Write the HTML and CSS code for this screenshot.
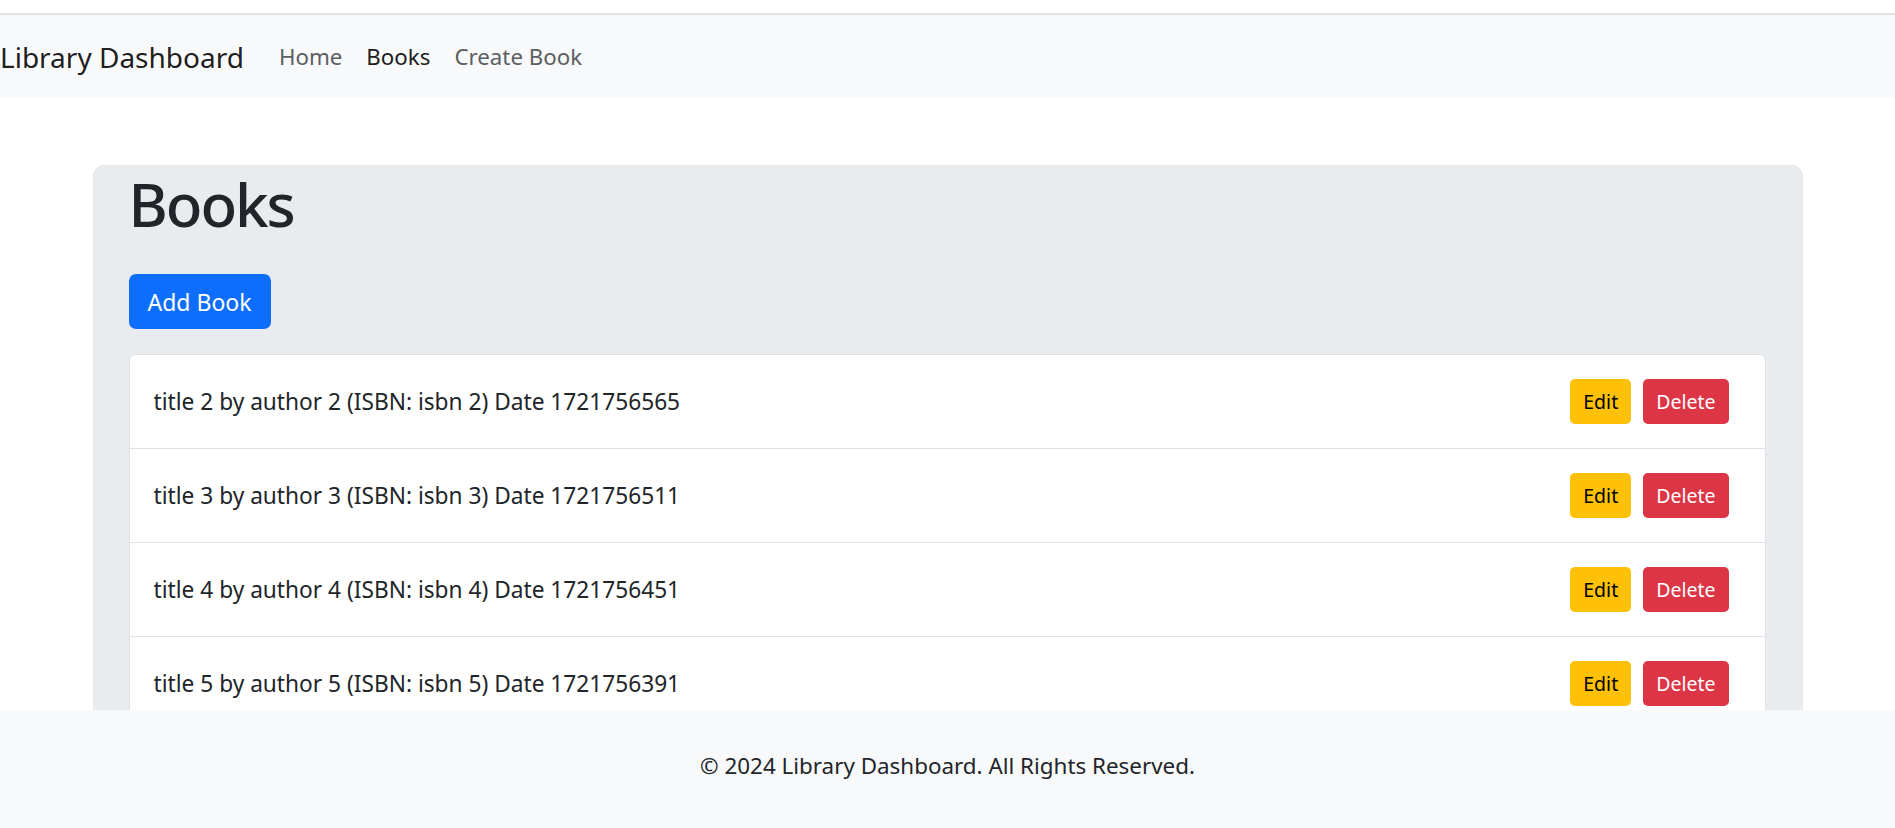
FILE: index.html
```html
<!DOCTYPE html>
<html lang="en">
<head>
<meta charset="utf-8">
<title>Library Dashboard</title>
<link rel="stylesheet" href="styles.css">
</head>
<body>
<div class="topstrip"></div>
<nav class="navbar">
  <a class="brand" href="#">Library Dashboard</a>
  <ul class="nav-links">
    <li><a class="nav-link" href="#">Home</a></li>
    <li><a class="nav-link active" href="#">Books</a></li>
    <li><a class="nav-link" href="#">Create Book</a></li>
  </ul>
</nav>
<main class="main">
  <section class="panel">
    <h1 class="title">Books</h1>
    <a class="btn btn-primary" href="#">Add Book</a>
    <ul class="list">
      <li class="item"><span>title 2 by author 2 (ISBN: isbn 2) Date 1721756565</span><div class="actions"><a class="btn-sm btn-warning" href="#">Edit</a><a class="btn-sm btn-danger" href="#">Delete</a></div></li>
      <li class="item"><span>title 3 by author 3 (ISBN: isbn 3) Date 1721756511</span><div class="actions"><a class="btn-sm btn-warning" href="#">Edit</a><a class="btn-sm btn-danger" href="#">Delete</a></div></li>
      <li class="item"><span>title 4 by author 4 (ISBN: isbn 4) Date 1721756451</span><div class="actions"><a class="btn-sm btn-warning" href="#">Edit</a><a class="btn-sm btn-danger" href="#">Delete</a></div></li>
      <li class="item"><span>title 5 by author 5 (ISBN: isbn 5) Date 1721756391</span><div class="actions"><a class="btn-sm btn-warning" href="#">Edit</a><a class="btn-sm btn-danger" href="#">Delete</a></div></li>
      <li class="item"><span>title 6 by author 6 (ISBN: isbn 6) Date 1721756331</span><div class="actions"><a class="btn-sm btn-warning" href="#">Edit</a><a class="btn-sm btn-danger" href="#">Delete</a></div></li>
    </ul>
  </section>
</main>
<footer class="footer">© 2024 Library Dashboard. All Rights Reserved.</footer>
</body>
</html>
```

FILE: styles.css
```css
* { box-sizing: border-box; }
html, body { margin: 0; padding: 0; }
body {
  font-family: "Noto Sans", "Open Sans", sans-serif;
  font-size: 22.7px;
  color: #212529;
  background: #fff;
  overflow: hidden;
  height: 828px;
}
a { text-decoration: none; }
.topstrip {
  height: 15px;
  border-bottom: 2px solid #e2e2e2;
}
.navbar {
  height: 83px;
  background: #f8f9fa;
  display: flex;
  align-items: center;
}
.brand {
  font-size: 28px;
  color: rgba(0,0,0,0.9);
  margin-right: 23px;
  line-height: 1.5;
}
.nav-links {
  list-style: none;
  margin: 0;
  padding: 0;
  display: flex;
}
.nav-link {
  display: block;
  padding: 0 12px;
  font-size: 22.3px;
  color: #5c5f62;
}
.nav-link.active { color: #1d1d1d; }
.main {
  padding-top: 67px;
}
.panel {
  width: 1710px;
  margin: 0 auto;
  background: #e9ecef;
  border-radius: 11px;
  padding: 0 37px 40px 36px;
}
.title {
  margin: 0;
  font-size: 60px;
  font-weight: 500;
  letter-spacing: -2px;
  line-height: 1;
  padding-top: 9px;
  padding-bottom: 40px;
  color: #212529;
}
.btn {
  display: inline-flex;
  align-items: center;
  height: 55px;
  padding: 0 19px;
  border-radius: 7px;
  font-size: 23px;
}
.btn-primary {
  background: #0d6efd;
  color: #fff;
}
.list {
  list-style: none;
  margin: 25px 0 0;
  padding: 0;
  background: #fff;
  border: 1px solid #dee2e6;
  border-radius: 7px;
}
.item {
  height: 94px;
  display: flex;
  align-items: center;
  justify-content: space-between;
  padding: 0 36px 0 24px;
  border-bottom: 1px solid #dee2e6;
}
.actions {
  display: flex;
  gap: 12px;
}
.btn-sm {
  display: inline-flex;
  align-items: center;
  justify-content: center;
  height: 45px;
  padding: 0 13px;
  border-radius: 5px;
  font-size: 19.5px;
}
.btn-warning { background: #ffc107; color: #000; }
.btn-danger { background: #dc3545; color: #fff; }
.footer {
  position: fixed;
  left: 0;
  right: 0;
  bottom: 0;
  height: 118px;
  padding-bottom: 7px;
  background: #f8f9fa;
  display: flex;
  align-items: center;
  justify-content: center;
  font-size: 22.4px;
  color: #212529;
}
```
